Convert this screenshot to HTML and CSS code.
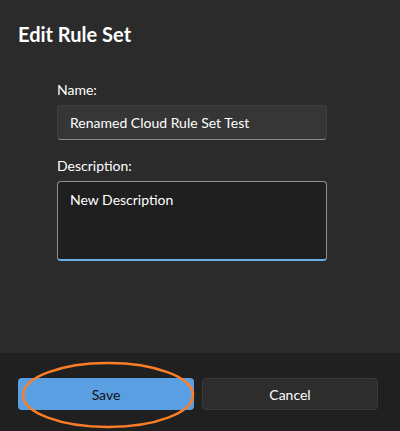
FILE: index.html
```html
<!DOCTYPE html>
<html>
<head>
<meta charset="utf-8">
<link rel="stylesheet" href="styles.css">
</head>
<body>
<div class="dialog">
  <div class="content">
    <h1 class="title">Edit Rule Set</h1>
    <div class="form">
      <label class="label">Name:</label>
      <div class="input">Renamed Cloud Rule Set Test</div>
      <label class="label desc-label">Description:</label>
      <div class="textarea">New Description</div>
    </div>
  </div>
  <div class="footer">
    <div class="btn primary">Save
      <svg class="ring" width="176" height="68" viewBox="0 0 176 68"><ellipse cx="88" cy="34" rx="85" ry="32" fill="none" stroke="#fd7e25" stroke-width="2.5"/></svg>
    </div>
    <div class="btn secondary">Cancel</div>
  </div>
</div>
</body>
</html>
```
FILE: styles.css
```css
html, body { margin: 0; padding: 0; }
body {
  width: 400px; height: 431px; overflow: hidden;
  background: #2b2b2b;
  font-family: Lato, "Noto Sans", sans-serif;
  color: #ffffff;
}
.dialog { display: flex; flex-direction: column; height: 431px; }
.content { flex: 1; padding: 0 18px; }
.title {
  margin: 0; padding-top: 21px;
  font-size: 20px; font-weight: 700; line-height: 26px;
  height: 26px;
}
.form { display: flex; flex-direction: column; margin: 34px 0 0 39px; width: 270px; }
.label { font-size: 14px; line-height: 18px; height: 18px; margin-bottom: 6px; }
.desc-label { margin-top: 17px; }
.input {
  box-sizing: border-box; height: 35px;
  background: #363636; border: 1px solid #3f3f3f; border-bottom-color: #8a8a8a;
  border-radius: 4px; padding: 0 12px;
  font-size: 14px; line-height: 33px;
}
.textarea {
  box-sizing: border-box; height: 80px;
  background: #1f1f1f; border: 1px solid #8f8f8f; border-bottom: 2px solid #6aaee6;
  border-radius: 4px; padding: 8px 12px;
  font-size: 14px; line-height: 20px;
}
.footer {
  height: 78px; background: #202020;
  display: flex; gap: 8px; padding: 25px 22px 0 18px; box-sizing: border-box;
}
.btn {
  box-sizing: border-box; width: 176px; height: 32px; border-radius: 4px;
  display: flex; align-items: center; justify-content: center;
  font-size: 14px; position: relative;
}
.primary { background: #5b9fe3; color: #111; }
.secondary { background: #2d2d2d; border: 1px solid #3a3a3a; color: #fff; }
.ring { position: absolute; left: 2px; top: -17px; }
```
